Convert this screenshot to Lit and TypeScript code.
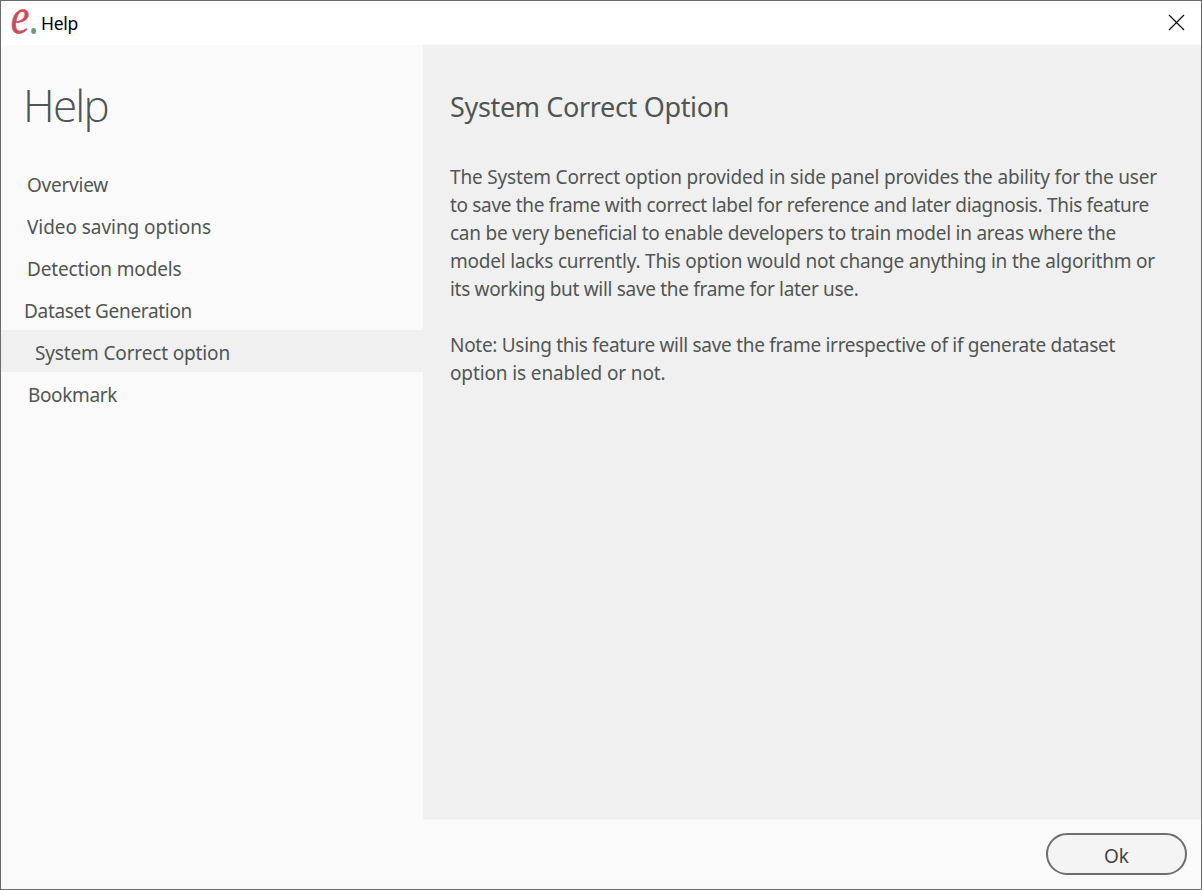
import { LitElement, html, css } from "lit";
import { customElement, property } from "lit/decorators.js";
import { classMap } from "lit/directives/class-map.js";

/** One line of text whose tracking is adjusted so that it spans a given width. */
@customElement("fit-text")
class FitText extends LitElement {
  @property({ type: Number }) span = 0;
  @property() text = "";

  static styles = css`
    :host { display: block; white-space: nowrap; }
    .run { display: inline-block; }
  `;

  updated() {
    const run = this.renderRoot.querySelector(".run") as HTMLElement;
    run.style.letterSpacing = "0px";
    const natural = run.getBoundingClientRect().width;
    run.style.letterSpacing = `${(this.span - natural) / this.text.length}px`;
  }

  render() {
    return html`<span class="run">${this.text}</span>`;
  }
}

const topics = [
  { label: "Overview", span: 81, indent: "base" },
  { label: "Video saving options", span: 184, indent: "base" },
  { label: "Detection models", span: 154.5, indent: "base" },
  { label: "Dataset Generation", span: 168, indent: "group" },
  { label: "System Correct option", span: 195, indent: "child", selected: true },
  { label: "Bookmark", span: 89, indent: "last" },
];

const paragraphs = [
  [
    { text: "The System Correct option provided in side panel provides the ability for the user", span: 707 },
    { text: "to save the frame with correct label for reference and later diagnosis. This feature", span: 699 },
    { text: "can be very beneficial to enable developers to train model in areas where the", span: 666 },
    { text: "model lacks currently. This option would not change anything in the algorithm or", span: 705 },
    { text: "its working but will save the frame for later use.", span: 408.5 },
  ],
  [
    { text: "Note: Using this feature will save the frame irrespective of if generate dataset", span: 665 },
    { text: "option is enabled or not.", span: 215.5 },
  ],
];

@customElement("app-root")
class AppRoot extends LitElement {
  static styles = css`
    :host {
      display: block;
      font-family: "Noto Sans", "Open Sans", sans-serif;
      color: #505654;
    }
    .window {
      box-sizing: border-box;
      width: 1202px;
      height: 890px;
      border: 1px solid #6b6b6b;
      background: #fafafa;
      display: grid;
      grid-template: 44px 774px 1fr / 422px 1fr;
    }
    .titlebar {
      grid-column: 1 / 3;
      background: #fff;
      display: flex;
      align-items: center;
      padding: 0 16px 0 7px;
      color: #000;
      font-size: 17.5px;
    }
    .logo { width: 32px; height: 32px; flex: none; margin-bottom: 2px; overflow: visible; }
    .mark {
      font: italic 400 50px "Liberation Serif", serif;
      fill: #cf4a58;
      stroke: #cf4a58;
      stroke-width: 0.5px;
    }
    .caption { line-height: 24px; flex: 1; padding: 0 0 1px 1px; }
    .close { width: 17px; height: 17px; flex: none; margin-bottom: 1px; }
    .sidebar { padding-top: 30px; }
    h1, h2, p { margin: 0; font-weight: 400; }
    h1 {
      font-family: "Open Sans", sans-serif;
      font-weight: 300;
      font-size: 44px;
      line-height: 60px;
      padding-left: 22px;
      margin-bottom: 27px;
    }
    .topic {
      box-sizing: border-box;
      height: 42px;
      padding-top: 2px;
      line-height: 42px;
      font-size: 19px;
    }
    .base { padding-left: 26px; }
    .group { padding-left: 23px; }
    .child { padding-left: 34px; }
    .last { padding-left: 27px; }
    .selected { background: #f0f0f0; }
    .content { background: #f0f0f0; padding: 42px 0 0 27px; }
    h2 { font-size: 27px; line-height: 40px; margin-bottom: 36px; }
    p { font-size: 19px; line-height: 28px; margin-bottom: 28px; }
    .footer {
      grid-column: 1 / 3;
      display: flex;
      justify-content: flex-end;
      padding: 14px 14px 0 0;
    }
    button {
      box-sizing: border-box;
      width: 141px;
      height: 42px;
      border: 2px solid #6e6e6e;
      border-radius: 21px;
      background: #f4f4f4;
      color: #3f4442;
      font: 400 19px/42px "Noto Sans", sans-serif;
      padding: 0;
    }
  `;

  render() {
    return html`
      <div class="window">
        <header class="titlebar">
          <svg class="logo" viewBox="0 0 32 32">
            <text class="mark" transform="translate(2.8 27.4) scale(0.84 1)">e</text>
            <ellipse cx="25.700" cy="25" rx="2.500" ry="2.900" fill="#5f9f80" />
          </svg>
          <fit-text class="caption" text="Help" span="37"></fit-text>
          <svg class="close" viewBox="0 0 17 17">
            <path d="M1 1L16 16M16 1L1 16" stroke="#000" stroke-width="1.1" fill="none" />
          </svg>
        </header>
        <nav class="sidebar">
          <h1><fit-text text="Help" span="85"></fit-text></h1>
          ${topics.map(
            (t) => html`<div class=${classMap({ topic: true, [t.indent]: true, selected: !!t.selected })}>
              <fit-text .text=${t.label} .span=${t.span}></fit-text>
            </div>`
          )}
        </nav>
        <main class="content">
          <h2><fit-text text="System Correct Option" span="279"></fit-text></h2>
          ${paragraphs.map(
            (lines) => html`<p>${lines.map((l) => html`<fit-text .text=${l.text} .span=${l.span}></fit-text>`)}</p>`
          )}
        </main>
        <footer class="footer"><button>Ok</button></footer>
      </div>
    `;
  }
}
